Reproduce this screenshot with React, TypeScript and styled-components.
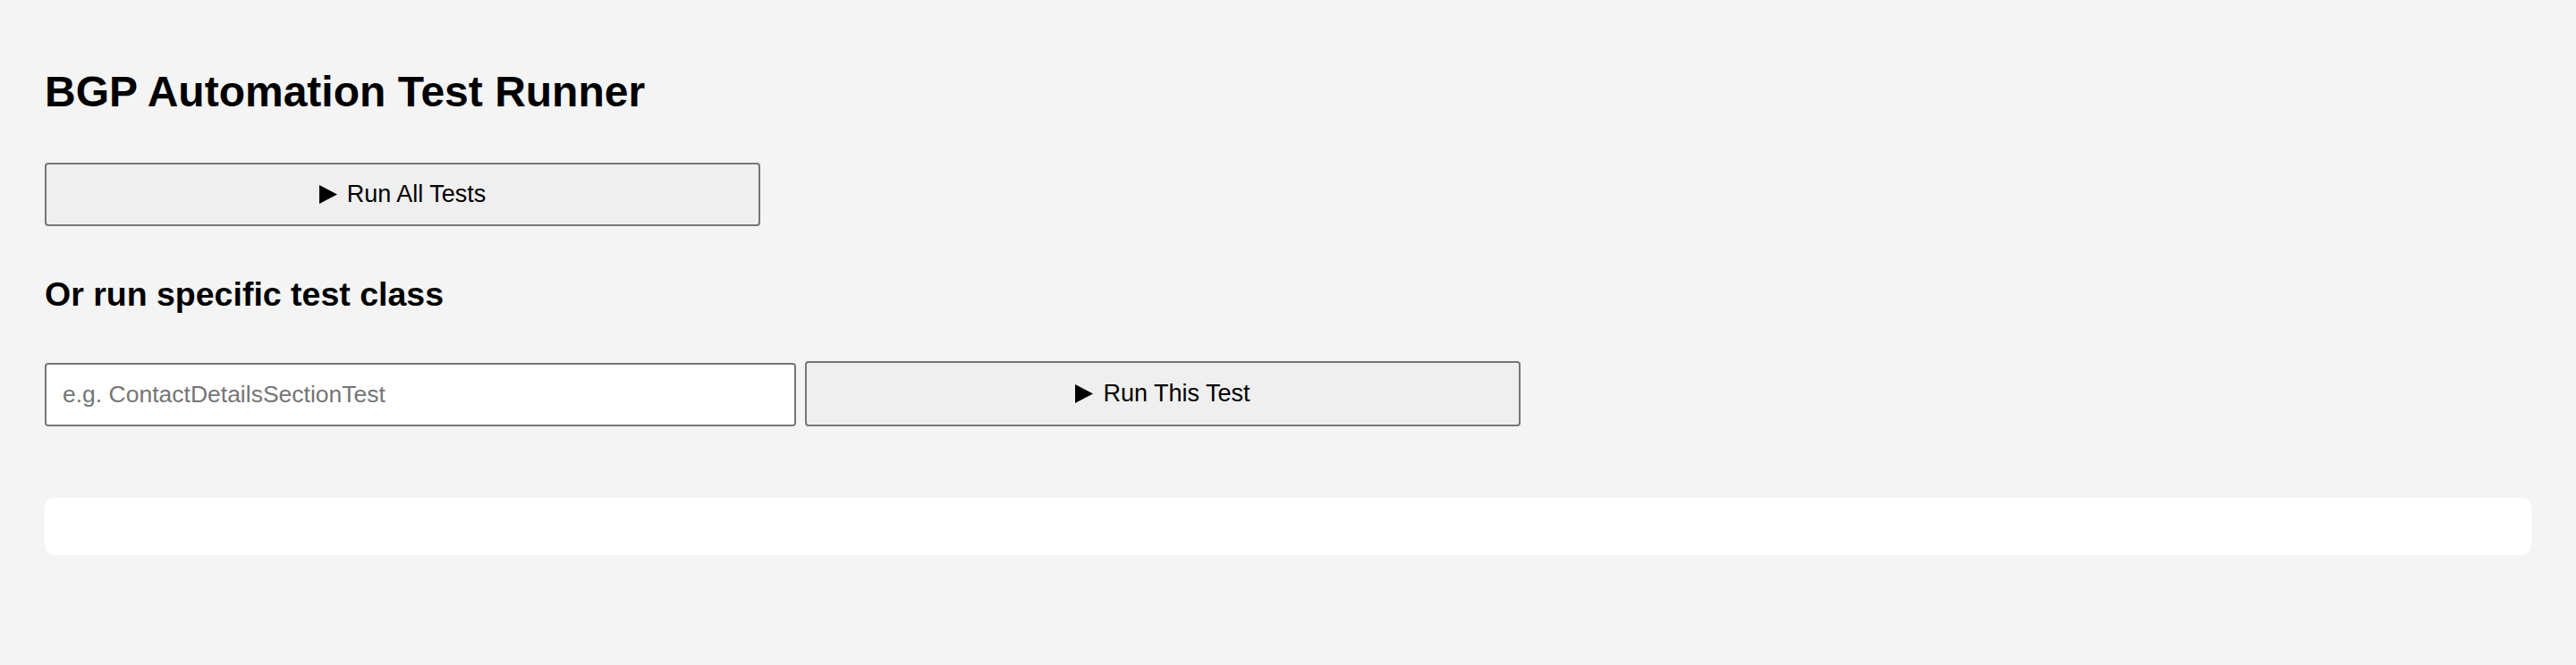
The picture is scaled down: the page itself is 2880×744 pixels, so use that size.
import React from "react";
import styled, { createGlobalStyle } from "styled-components";

const GlobalStyle = createGlobalStyle`
  html, body {
    margin: 0;
    padding: 0;
    background: #f4f4f4;
  }
  body {
    font-family: "Liberation Sans", Arial, Helvetica, sans-serif;
    color: #000;
  }
`;

const Page = styled.main`
  display: flex;
  flex-direction: column;
  align-items: flex-start;
  padding: 75px 50px 80px;
  min-height: 744px;
  box-sizing: border-box;
`;

const Title = styled.h1`
  margin: 0 0 52px;
  font-size: 48px;
  line-height: 55px;
  font-weight: 700;
`;

const Subtitle = styled.h2`
  margin: 55px 0 53px;
  font-size: 37.5px;
  line-height: 43px;
  font-weight: 700;
`;

const RunButton = styled.button<{ $height: number }>`
  display: inline-flex;
  align-items: center;
  justify-content: center;
  gap: 11px;
  width: 800px;
  height: ${(p) => p.$height}px;
  box-sizing: border-box;
  padding: 0 16px;
  background: #efefef;
  border: 2px solid #767676;
  border-radius: 4px;
  font-family: "Liberation Sans", Arial, Helvetica, sans-serif;
  font-size: 27px;
  color: #000;
  cursor: pointer;
`;

const PlayIcon = styled.svg`
  width: 20px;
  height: 21px;
  flex: none;
`;

const TestRow = styled.div`
  display: flex;
  align-items: flex-end;
  gap: 10px;
`;

const ClassInput = styled.input`
  width: 840px;
  height: 71px;
  box-sizing: border-box;
  padding: 0 18px;
  background: #fff;
  border: 2px solid #767676;
  border-radius: 4px;
  font-family: "Liberation Sans", Arial, Helvetica, sans-serif;
  font-size: 26.5px;
  color: #000;
  outline: none;
  &::placeholder {
    color: #757575;
  }
`;

const ResultBox = styled.section`
  align-self: stretch;
  margin-top: 80px;
  height: 64px;
  background: #fff;
  border-radius: 10px;
`;

const Play = () => (
  <PlayIcon viewBox="0 0 20 21" aria-hidden="true">
    <polygon points="0,0 20,10.5 0,21" fill="#000" />
  </PlayIcon>
);

export default function App() {
  return (
    <>
      <GlobalStyle />
      <Page>
        <Title>BGP Automation Test Runner</Title>
        <RunButton $height={71}>
          <Play />
          Run All Tests
        </RunButton>
        <Subtitle>Or run specific test class</Subtitle>
        <TestRow>
          <ClassInput type="text" placeholder="e.g. ContactDetailsSectionTest" />
          <RunButton $height={73}>
            <Play />
            Run This Test
          </RunButton>
        </TestRow>
        <ResultBox />
      </Page>
    </>
  );
}
